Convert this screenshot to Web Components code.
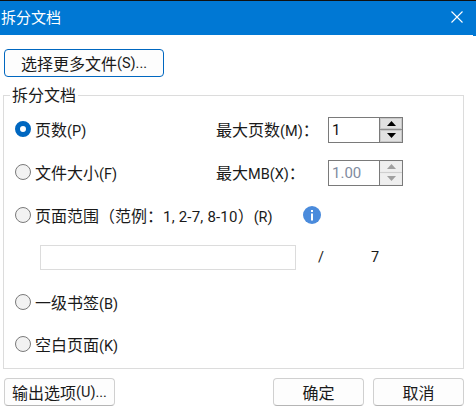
<!DOCTYPE html>
<html lang="zh">
<head>
<meta charset="utf-8">
<title>拆分文档</title>
<style>
  html, body { margin: 0; padding: 0; background: #fff; }
  body { width: 476px; height: 414px; overflow: hidden; }
</style>
</head>
<body>
<split-dialog></split-dialog>

<script>
const FONT = '"Open Sans", "Noto Sans CJK SC", sans-serif';

class TitleBar extends HTMLElement {
  constructor() {
    super();
    this.attachShadow({ mode: "open" });
    this.shadowRoot.innerHTML = `
      <style>
        :host { position: relative; display: flex; align-items: center; justify-content: space-between; box-sizing: border-box; height: 35px; border-top: 1px solid #111; background: #0078d4; color: #fff; font: 15px ${FONT}; padding: 0 13px 3px 1px; }
        :host::after { content: ""; position: absolute; right: 0; bottom: -1px; width: 3px; height: 1px; background: #0078d4; }
        svg { display: block; }
      </style>
      <slot></slot>
      <svg width="12" height="12" viewBox="0 0 12 12"><path d="M.5 .5 11.5 11.5M11.5 .5 .5 11.5" stroke="#fff" stroke-width="1.1" fill="none"/></svg>
    `;
  }
}

class DlgButton extends HTMLElement {
  constructor() {
    super();
    this.attachShadow({ mode: "open" });
    this.shadowRoot.innerHTML = `
      <style>
        :host { display: flex; align-items: center; justify-content: center; box-sizing: border-box; height: 28px; border: 1px solid #d0d0d0; border-bottom-color: #b5b5b5; border-radius: 4px; background: #fdfdfd; font: 16px ${FONT}; color: #1a1a1a; white-space: nowrap; }
        :host([primary]) { border: 1px solid #0067c0; }
      </style>
      <slot></slot>
    `;
  }
}

class RadioOption extends HTMLElement {
  constructor() {
    super();
    this.attachShadow({ mode: "open" });
    this.shadowRoot.innerHTML = `
      <style>
        :host { display: flex; align-items: center; gap: 4px; font: 16px ${FONT}; color: #1a1a1a; white-space: nowrap; }
        .dot { box-sizing: border-box; width: 16px; height: 16px; border-radius: 50%; border: 1px solid #7a7a7a; background: #f2f2f2; flex: none; }
        :host([checked]) .dot { border: 5px solid #0067c0; background: #fff; }
      </style>
      <span class="dot"></span><span><slot></slot></span>
    `;
  }
}

class SpinBox extends HTMLElement {
  constructor() {
    super();
    this.attachShadow({ mode: "open" });
    this.shadowRoot.innerHTML = `
      <style>
        :host { display: flex; box-sizing: border-box; width: 75px; height: 26px; border: 1px solid #7a7a7a; background: #fff; font: 15px Roboto, sans-serif; color: #111; }
        .val { flex: 1; display: flex; align-items: center; padding-left: 3px; }
        .btns { display: flex; flex-direction: column; width: 22px; border-left: 1px solid #7a7a7a; background: #8f8f8f; gap: 1px; }
        .b { flex: 1; display: flex; align-items: center; justify-content: center; background: #e1e1e1; border: 1px solid #c8c8c8; }
        svg { display: block; fill: #000; }
        :host([disabled]) { color: #7f8ba0; }
        :host([disabled]) .btns { background: #cfcfcf; }
        :host([disabled]) .b { background: #efefef; border-color: #ececec; }
        :host([disabled]) svg { fill: #a0a0a0; }
      </style>
      <span class="val"><slot></slot></span>
      <span class="btns">
        <span class="b"><svg width="9" height="5" viewBox="0 0 9 5"><path d="M4.5 0 9 5H0z"/></svg></span>
        <span class="b"><svg width="9" height="5" viewBox="0 0 9 5"><path d="M0 0H9L4.5 5z"/></svg></span>
      </span>
    `;
  }
}

class InfoIcon extends HTMLElement {
  constructor() {
    super();
    this.attachShadow({ mode: "open" });
    this.shadowRoot.innerHTML = `
      <style>:host { display: block; width: 18px; height: 18px; } svg { display: block; }</style>
      <svg width="18" height="18" viewBox="0 0 18 18">
        <circle cx="9" cy="9" r="9" fill="#4a8bdc"/>
        <rect x="8" y="7.5" width="2" height="7" fill="#fff"/>
        <rect x="8" y="4" width="2" height="2" fill="#fff"/>
      </svg>
    `;
  }
}

class SplitDialog extends HTMLElement {
  constructor() {
    super();
    this.attachShadow({ mode: "open" });
    this.shadowRoot.innerHTML = `
      <style>
        :host { display: block; width: 476px; height: 414px; background: #fff; font: 16px ${FONT}; color: #1a1a1a; }
        .l { font: 14.5px Roboto, sans-serif; }
        .nums { font: 15px Roboto, sans-serif; letter-spacing: .2px; }
        .body { padding: 14px 12px 0 4px; display: flex; flex-direction: column; }
        .top { width: 160px; }
        fieldset { box-sizing: border-box; margin: 10px 0 0 -1px; padding: 0; height: 282px; border: 1px solid #dcdcdc; min-width: 0; }
        legend { margin-left: 6px; padding: 0 2px; font-size: 16px; line-height: 16px; }
        .rows { display: flex; flex-direction: column; padding: 4px 0 0 11px; }
        .row { height: 43px; display: flex; align-items: center; }
        .row.last { height: 42px; }
        .label { margin-left: auto; width: 112px; white-space: nowrap; }
        .spin-end { margin: 2px 60px 0 0; }
        .info { margin-left: 30px; }
        .range { display: flex; align-items: center; height: 42px; margin-bottom: 2px; padding-left: 25px; }
        .box { box-sizing: border-box; width: 256px; height: 25px; border: 1px solid #dcdcdc; }
        .slash { margin-left: 22px; width: 53px; }
        .foot { display: flex; margin-top: 9px; gap: 9px; }
        .foot .opt { width: 111px; margin-right: auto; }
        .foot .act { width: 91px; }
      </style>
      <title-bar>拆分文档</title-bar>
      <div class="body">
        <dlg-button class="top" primary>选择更多文件<span class="l">(S)...</span></dlg-button>
        <fieldset>
          <legend>拆分文档</legend>
          <div class="rows">
            <div class="row"><radio-option checked>页数<span class="l">(P)</span></radio-option><span class="label">最大页数<span class="l">(M)</span>：</span><spin-box class="spin-end">1</spin-box></div>
            <div class="row"><radio-option>文件大小<span class="l">(F)</span></radio-option><span class="label">最大<span class="l">MB(X)</span>：</span><spin-box class="spin-end" disabled>1.00</spin-box></div>
            <div class="row"><radio-option>页面范围（范例：<span class="nums">1, 2-7, 8-10</span>）<span class="l">(R)</span></radio-option><info-icon class="info"></info-icon></div>
            <div class="range"><span class="box"></span><span class="slash l">/</span><span class="l">7</span></div>
            <div class="row"><radio-option>一级书签<span class="l">(B)</span></radio-option></div>
            <div class="row last"><radio-option>空白页面<span class="l">(K)</span></radio-option></div>
          </div>
        </fieldset>
        <div class="foot">
          <dlg-button class="opt">输出选项<span class="l">(U)...</span></dlg-button>
          <dlg-button class="act">确定</dlg-button>
          <dlg-button class="act">取消</dlg-button>
        </div>
      </div>
    `;
  }
}

customElements.define("title-bar", TitleBar);
customElements.define("dlg-button", DlgButton);
customElements.define("radio-option", RadioOption);
customElements.define("spin-box", SpinBox);
customElements.define("info-icon", InfoIcon);
customElements.define("split-dialog", SplitDialog);
</script>
</body>
</html>
